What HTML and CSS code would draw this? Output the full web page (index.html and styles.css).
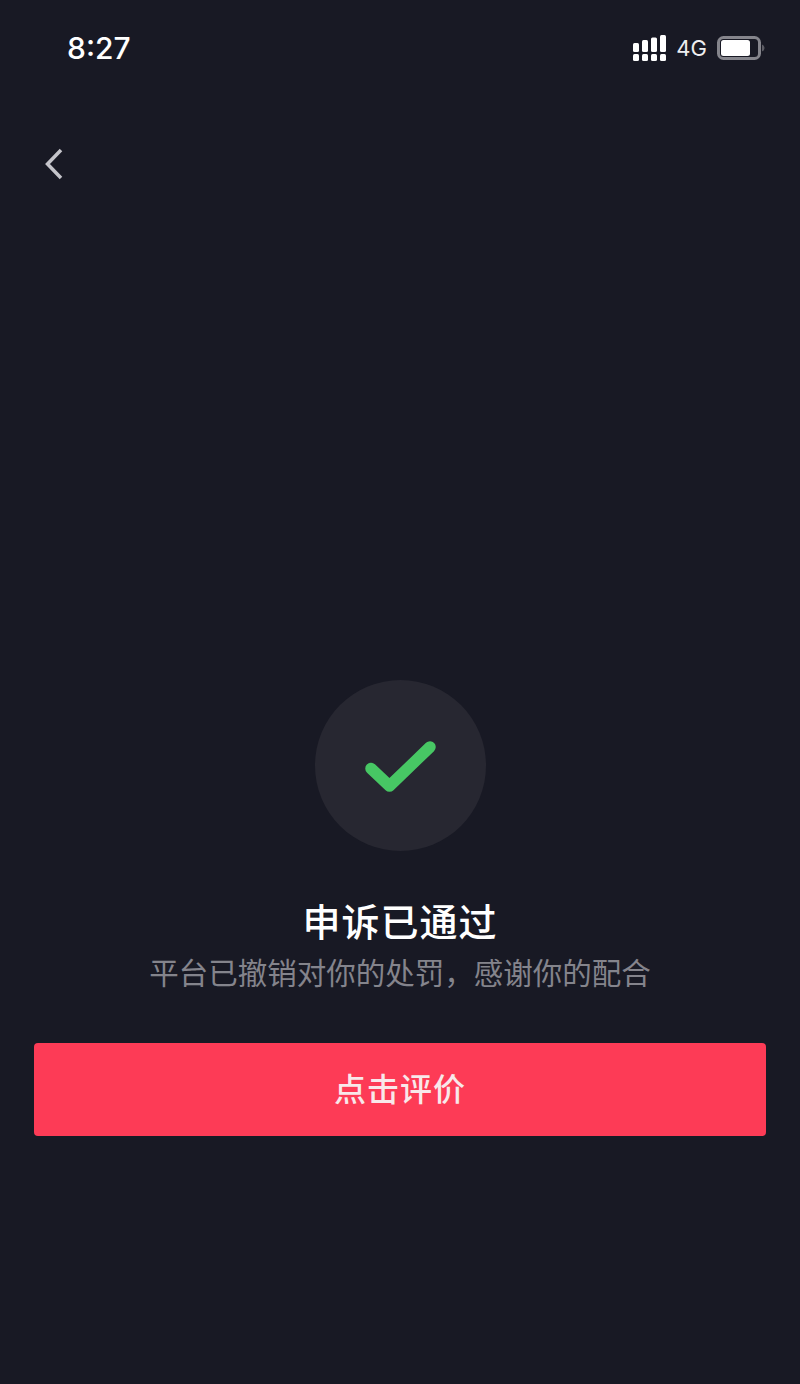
FILE: index.html
```html
<!doctype html>
<html lang="zh-CN">
  <head>
    <meta charset="UTF-8" />
    <meta name="viewport" content="width=device-width, initial-scale=1.0" />
    <title>申诉已通过</title>
    <link rel="stylesheet" href="styles.css">
  </head>
  <body>
    <div class="screen">
      <header class="status-bar">
        <span class="time">8:27</span>
        <div class="status-icons">
          <svg class="signal" width="33" height="26" viewBox="0 0 33 26">
            <rect x="0" y="8" width="6" height="9" rx="1.500" />
            <rect x="9" y="5" width="6" height="12" rx="1.500" />
            <rect x="18" y="2.500" width="6" height="14.500" rx="1.500" />
            <rect x="27" y="0" width="6" height="17" rx="1.500" />
            <rect x="0" y="19" width="6" height="7" rx="1.500" />
            <rect x="9" y="19" width="6" height="7" rx="1.500" />
            <rect x="18" y="19" width="6" height="7" rx="1.500" />
            <rect x="27" y="19" width="6" height="7" rx="1.500" />
          </svg>
          <span class="network">4G</span>
          <svg class="battery" width="48" height="24" viewBox="0 0 48 24">
            <rect x="1.500" y="1.500" width="41" height="21" rx="5" fill="none" stroke="#85858c" stroke-width="3" />
            <rect x="4" y="4" width="29" height="16" rx="2.500" fill="#fff" />
            <path d="M45 8.500c1.500.5 2.500 2 2.500 3.500s-1 3-2.500 3.500z" fill="#5d5d65" />
          </svg>
        </div>
      </header>

      <a class="back" href="#">
        <svg width="18" height="32" viewBox="0 0 18 32">
          <path d="M16 2 2.500 16 16 30" fill="none" stroke="#c4c4ca" stroke-width="3.500" />
        </svg>
      </a>

      <main class="result">
        <div class="result-icon">
          <svg class="check" width="72" height="54" viewBox="0 0 72 54">
            <path d="M7 29.500 25.500 47 66 8" fill="none" stroke="#47c764" stroke-width="11.500" stroke-linecap="round" stroke-linejoin="round" />
          </svg>
        </div>
        <h1>申诉已通过</h1>
        <p>平台已撤销对你的处罚，感谢你的配合</p>
        <button class="rate-btn" type="button">点击评价</button>
      </main>
    </div>
  </body>
</html>
```

FILE: styles.css
```css
body {
  margin: 0;
  padding: 0;
  font-family: Inter, "Noto Sans CJK SC", sans-serif;
  background-color: #181924;
}

.screen {
  height: 1384px;
  overflow: hidden;
}

/* Status bar */
.status-bar {
  display: flex;
  justify-content: space-between;
  align-items: center;
  height: 36px;
  padding: 30px 35px 0 67px;
}

.time {
  font-size: 30px;
  font-weight: 500;
  color: #fff;
}

.status-icons {
  display: flex;
  align-items: center;
}

.signal {
  fill: #fff;
}

.network {
  margin-left: 10px;
  margin-right: 10px;
  font-size: 22px;
  color: #eeeef0;
}

.back {
  display: block;
  width: 18px;
  height: 32px;
  margin: 82px 0 0 45px;
}

.back svg {
  display: block;
}

/* Result block */
.result {
  display: flex;
  flex-direction: column;
  align-items: center;
  padding: 0 34px;
  margin-top: 500px;
}

.result-icon {
  display: flex;
  justify-content: center;
  align-items: center;
  width: 171px;
  height: 171px;
  border-radius: 50%;
  background-color: #272731;
}

.result h1 {
  margin: 46px 0 0 0;
  font-size: 38px;
  line-height: 50px;
  font-weight: 500;
  letter-spacing: 1px;
  color: #fff;
}

.result p {
  margin: 4px 0 0 0;
  font-size: 29.500px;
  line-height: 44px;
  color: #84848c;
}

.rate-btn {
  width: 100%;
  height: 93px;
  margin-top: 48px;
  padding: 0 0 6px 0;
  border: none;
  border-radius: 4px;
  background-color: #fd3b56;
  font-family: inherit;
  font-size: 32px;
  font-weight: 500;
  letter-spacing: 1px;
  color: #f8e8ea;
}
```
